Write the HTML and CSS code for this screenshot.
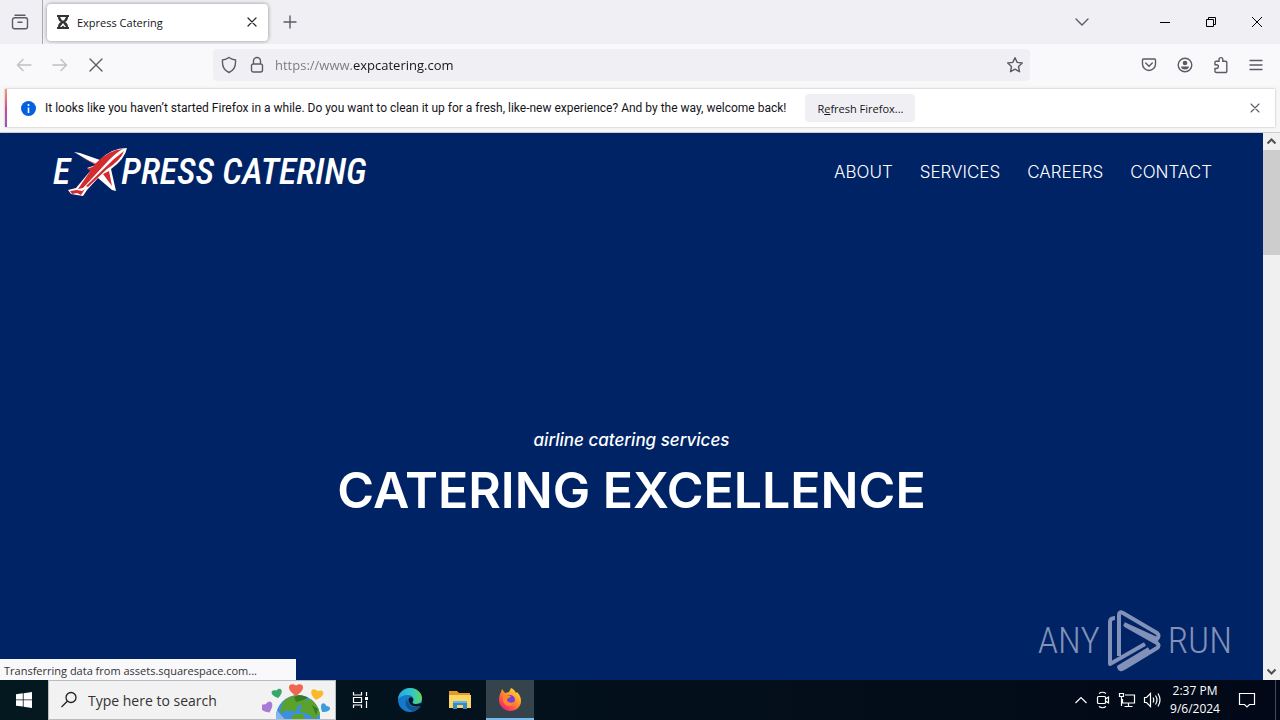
FILE: index.html
```html
<!DOCTYPE html>
<html lang="en">
<head>
<meta charset="utf-8">
<title>Express Catering</title>
<link rel="stylesheet" href="styles.css">
</head>
<body>
<header class="tabbar">
  <button class="recent" aria-label="Recent browsing"><svg width="18" height="18" viewBox="0 0 18 18" class="line"><path d="M4 2.200h10M3.500 4.800h11a2 2 0 0 1 2 2v7a2 2 0 0 1-2 2h-11a2 2 0 0 1-2-2v-7a2 2 0 0 1 2-2zM7 9.200h4"/></svg></button>
  <div class="tab">
    <svg width="14" height="16" viewBox="0 0 14 16"><path fill="#333" d="M1 1h12v2h-1c0 2.500-1 4-3 5 2 1 3 2.500 3 5h1v2H1v-2h1c0-2.500 1-4 3-5-2-1-3-2.500-3-5H1z"/><path fill="#fff" d="M4 3h6L8 6.500H6zM7 9l3 4H8.500L7 11.500 5.500 13H4z"/></svg>
    <span class="tab-title">Express Catering</span>
    <button aria-label="Close tab"><svg width="10" height="10" viewBox="0 0 10 10" class="line dark"><path d="M1 1l8 8M9 1L1 9"/></svg></button>
  </div>
  <button class="newtab" aria-label="New tab"><svg width="14" height="14" viewBox="0 0 14 14" class="line"><path d="M7 1v12M1 7h12"/></svg></button>
  <div class="window">
    <button class="alltabs" aria-label="List all tabs"><svg width="14" height="8" viewBox="0 0 14 8" class="line"><path d="M1 1l6 6 6-6"/></svg></button>
    <button aria-label="Minimize"><svg width="12" height="12" viewBox="0 0 12 12" class="line black crisp"><path d="M1 6h10"/></svg></button>
    <button aria-label="Restore"><svg width="12" height="12" viewBox="0 0 12 12" class="line black restore"><path d="M1.500 3.500h7v7h-7zM3.500 3.500v-2h7v7h-2"/></svg></button>
    <button aria-label="Close"><svg width="12" height="12" viewBox="0 0 12 12" class="line black"><path d="M1 1l10 10M11 1L1 11"/></svg></button>
  </div>
</header>
<div class="toolbar">
  <div class="history">
    <button aria-label="Back" disabled><svg width="16" height="16" viewBox="0 0 16 16" class="line faint"><path d="M15 8H2M7 2.500L1.500 8 7 13.500"/></svg></button>
    <button aria-label="Forward" disabled><svg width="16" height="16" viewBox="0 0 16 16" class="line faint"><path d="M1 8h13M9 2.500L14.500 8 9 13.500"/></svg></button>
    <button aria-label="Stop"><svg width="16" height="14" viewBox="0 0 16 14" class="line"><path d="M2 1l12 12M14 1L2 13"/></svg></button>
  </div>
  <div class="urlbar">
    <button aria-label="Tracking protection"><svg width="16" height="18" viewBox="0 0 16 18" class="line"><path d="M8 1.500c2 1.600 4 2.300 6.500 2.500.5 6-1.500 10.500-6.500 12.500C3 14.500 1 10 1.500 4 4 3.800 6 3.100 8 1.500z"/></svg></button>
    <button aria-label="Site security"><svg width="14" height="18" viewBox="0 0 14 18" class="line"><path d="M3.500 8V5a3.500 3.500 0 0 1 7 0v3M3 8h8a1.500 1.500 0 0 1 1.500 1.500V14a2 2 0 0 1-2 2h-7a2 2 0 0 1-2-2V9.500A1.500 1.500 0 0 1 3 8z"/></svg></button>
    <input class="url" type="text" aria-label="Address" value="https://www.expcatering.com">
    <button aria-label="Bookmark"><svg width="18" height="18" viewBox="0 0 18 18" class="line"><path stroke-linejoin="round" d="M9 1.700l2.200 4.700 5.100.6-3.800 3.500 1 5.200L9 13.200l-4.500 2.500 1-5.200L1.700 7l5.100-.6z"/></svg></button>
  </div>
  <div class="tools">
    <button aria-label="Pocket"><svg width="16" height="16" viewBox="0 0 16 16" class="line"><path d="M2.500 2h11a1 1 0 0 1 1 1v4a6.500 6.500 0 0 1-13 0V3a1 1 0 0 1 1-1zM4.700 6L8 9.200 11.300 6"/></svg></button>
    <button aria-label="Account"><svg width="16" height="16" viewBox="0 0 16 16" class="line"><circle cx="8" cy="8" r="6.800"/><circle cx="8" cy="6" r="2.300" fill="#5b5b66" stroke="none"/><path d="M4 9.500h8c0 1.800-1.800 3-4 3s-4-1.200-4-3z" fill="#5b5b66" stroke="none"/></svg></button>
    <button aria-label="Extensions"><svg width="16" height="18" viewBox="0 0 16 18" class="line"><path d="M2 6.500a1.200 1.200 0 0 1 1.200-1.300H6V3.500a1.900 1.900 0 0 1 3.800 0v1.700h2.700A1.300 1.300 0 0 1 13.800 6.500v8.700a1.200 1.200 0 0 1-1.300 1.300H3.200A1.200 1.200 0 0 1 2 15.200v-2.700h1.500a1.900 1.900 0 0 0 0-3.800H2z"/></svg></button>
    <button aria-label="Menu"><svg width="14" height="12" viewBox="0 0 14 12" class="line"><path d="M1 1.500h12M1 6h12M1 10.500h12"/></svg></button>
  </div>
</div>
<div class="notice-area">
  <div class="notice" role="status">
    <svg width="15" height="15" viewBox="0 0 15 15"><circle cx="7.500" cy="7.500" r="7.500" fill="#0560df"/><path d="M7.500 3v2M7.500 6.500V12" stroke="#fff" stroke-width="1.600"/></svg>
    <span class="notice-text">It looks like you haven’t started Firefox in a while. Do you want to clean it up for a fresh, like-new experience? And by the way, welcome back!</span>
    <button class="refresh">R<u>e</u>fresh Firefox...</button>
    <button class="dismiss" aria-label="Dismiss"><svg width="10" height="10" viewBox="0 0 10 10" class="line thin"><path d="M1 1l8 8M9 1L1 9"/></svg></button>
  </div>
</div>
<div class="viewport">
  <main class="site">
    <div class="site-head">
      <a class="logo" href="#" aria-label="Express Catering"><span>E</span><svg width="60" height="50" viewBox="0 0 60 50"><path fill="#fff" d="M6 5l6 1 20 7Q43 1 59 1 57 12 43 22l5 22-4-1-14-12-11 12-4 6-12-2-3-4 8-2 15-18-4-2 9-3z"/><g fill="#d32b2f"><path d="M9 9l20 8-5 5 3-5zM27 17Q40 3 55 2q-6 3-14 11L15 41l-5 1zM19 22l10-4-5 6zM56 4q-3 9-17 18L20 40l-2-1 28-27zM41 24l3 15-9-12zM2 44l7-1 5 1 3-2-4 6-4-2-5 1z"/></g></svg><span>PRESS CATERING</span></a>
      <nav class="menu"><a href="#">ABOUT</a><a href="#">SERVICES</a><a href="#">CAREERS</a><a href="#">CONTACT</a></nav>
    </div>
    <div class="hero">
      <p class="tagline">airline catering services</p>
      <h1>CATERING EXCELLENCE</h1>
    </div>
    <div class="status">Transferring data from assets.squarespace.com...</div>
    <div class="watermark"><span>ANY</span><svg width="54" height="62" viewBox="0 0 54 62" fill="none" stroke="#8291b7" stroke-width="4" stroke-linejoin="round"><path d="M8 8Q3 8 3 12v42L38 34M12 46V5q0-4 4-2l34 20q3 3 0 6L17 14"/><path d="M18 15l32 18q3 3 0 5L17 58q-4 3-5-1l30-18"/></svg><span>RUN</span></div>
  </main>
  <div class="scrollbar" aria-hidden="true">
    <svg width="17" height="17" viewBox="0 0 17 17"><path d="M4.500 10.500l4-4 4 4" fill="none" stroke="#505050" stroke-width="2"/></svg>
    <div class="thumb"></div>
    <svg width="17" height="17" viewBox="0 0 17 17"><path d="M4.500 6.500l4 4 4-4" fill="none" stroke="#505050" stroke-width="2"/></svg>
  </div>
</div>
<footer class="taskbar">
  <button class="start" aria-label="Start"><svg width="16" height="16" viewBox="0 0 16 16" fill="#fff"><path d="M0 2.300l6.800-1v6.200H0zM7.600 1.200L16 0v7.500H7.600zM0 8.300h6.800v6.300L0 13.700zM7.600 8.300H16V16l-8.400-1.200z"/></svg></button>
  <label class="search"><svg width="18" height="18" viewBox="0 0 18 18" fill="none" stroke="#222" stroke-width="1.300"><circle cx="11" cy="6.500" r="5"/><path d="M7.300 10.200L1.500 16"/></svg>
    <input type="text" placeholder="Type here to search" aria-label="Search">
    <svg width="72" height="38" viewBox="0 0 72 38"><defs><clipPath id="globe"><circle cx="36" cy="36" r="22"/></clipPath><path id="heart" d="M0 6C-10 0-6-7 0-3 6-7 10 0 0 6z"/></defs>
      <g clip-path="url(#globe)"><path fill="#3d8fe0" d="M12 12h50v30H12z"/><path fill="#82b7f4" d="M12 26q9-10 10-12l-10-2v30h14z"/><path fill="#5ba22c" d="M22 20q10-9 20-5 4 3 0 6l-6 4-3 6-8-2-7 4 2-9zM40 22l10-5 10 15-8 6-6-5-8-2zM32 33l9 0 3 7H28z"/><path fill="#347d24" d="M32 16q8-4 16 0l-7 3-7 2zM50 24l6 4-2 6z"/></g>
      <use href="#heart" transform="translate(34 8) scale(1.150)" fill="#f2654f"/><use href="#heart" transform="translate(15 12) rotate(-15) scale(.85)" fill="#35a768"/><use href="#heart" transform="translate(55 13) rotate(12)" fill="#f9b928"/><use href="#heart" transform="translate(5 26) rotate(-24)" fill="#a77bd4"/><use href="#heart" transform="translate(63 27) rotate(35) scale(.8)" fill="#3d9ce0"/></svg>
  </label>
  <button class="app" aria-label="Task View"><svg width="18" height="18" viewBox="0 0 18 18" fill="none" stroke="#fff" stroke-width="1.200"><path d="M2.500 1v3h8V1M2.500 17v-3h8v3M2.500 6.500h8v5h-8zM15.500 1v4M15.500 10v7"/><path fill="#fff" stroke="none" d="M14 6h3v3h-3z"/></svg></button>
  <button class="app" aria-label="Edge"><svg width="26" height="26" viewBox="0 0 26 26"><defs><linearGradient id="edge-top"><stop stop-color="#2ba5df"/><stop offset=".55" stop-color="#31c5cc"/><stop offset="1" stop-color="#62d858"/></linearGradient></defs><circle cx="13" cy="13" r="12" fill="#1478cb"/><path fill="url(#edge-top)" d="M1 12C2 5 7 1 13 1c7 0 12 5 12 10 0 4-3 6-6 6-2 0-4-1-3-2 2-3 0-7-5-7-5 0-8 2-10 4z"/><path fill="#145292" d="M10 12c-4 5 1 12 7 12 3-1 6-3 7-5-6 3-13 0-14-7z"/><path fill="#041820" d="M12 11c2-2 5 0 4 3-1 1-1 3 3 3l7-1-2 3c-9 2-14-3-12-8z"/></svg></button>
  <button class="app" aria-label="File Explorer"><svg width="22" height="20" viewBox="0 0 22 20"><path fill="#e29b27" d="M0 1h8l2 2h11v4H0z"/><path fill="#fed565" d="M0 5h22v13H0z"/><path fill="#328cca" d="M4 11h14v8h-4v-4H8v4H4z"/><path fill="#61b6e7" d="M4 11h14v2H4z"/></svg></button>
  <button class="app active" aria-label="Firefox"><svg width="24" height="24" viewBox="0 0 24 24"><defs><linearGradient id="fox" x1="1" y1="0" x2=".2" y2="1"><stop stop-color="#fff044"/><stop offset=".45" stop-color="#ff9a25"/><stop offset=".8" stop-color="#ff4059"/><stop offset="1" stop-color="#dc188b"/></linearGradient></defs><path fill="url(#fox)" d="M3 5l1-3 3 4 4-1 2-4c3 1 4 3 5 5l1-1c3 3 4 6 4 9 0 6-5 10-11 10S1 19 1 13c0-4 1-6 2-8z"/><circle cx="12" cy="13" r="5" fill="#7440dc"/><path fill="#ff8a25" d="M5 8c4-1 5 1 8 1-1 2-3 2-4 3 0 4 5 5 8 2-1 6-11 7-12-1z"/></svg></button>
  <div class="tray">
    <button aria-label="Show hidden icons"><svg width="14" height="8" viewBox="0 0 14 8"><path d="M1.500 7L7 1.500 12.500 7"/></svg></button>
    <button aria-label="Meet Now"><svg width="16" height="20" viewBox="0 0 16 20"><path d="M3.500 6.500h6a1 1 0 0 1 1 1v5a1 1 0 0 1-1 1h-6a1 1 0 0 1-1-1v-5a1 1 0 0 1 1-1zM10.500 9l3-2v6l-3-2M4 3.500q3.500-2.500 7 0M4 16.500q3.500 2.500 7 0"/></svg></button>
    <button aria-label="Network"><svg width="18" height="16" viewBox="0 0 18 16"><path d="M7 3h9.500v8H4.500V7M10.500 11v3.500M6.500 14.500h8M1.500 1.500h4v3h-4zM3.500 4.500V14"/></svg></button>
    <button aria-label="Volume"><svg width="18" height="16" viewBox="0 0 18 16"><path d="M1.500 5.500h2l4-4v13l-4-4h-2zM10 5.500q1.500 2.500 0 5M12.500 3.500q3 4.500 0 9M15 1.500q4 6.500 0 13"/></svg></button>
    <div class="clock"><span>2:37 PM</span><span>9/6/2024</span></div>
    <button class="action" aria-label="Notifications"><svg width="18" height="18" viewBox="0 0 18 18"><path d="M1.500 2.500h15v11h-5L9 16l-2.500-2.500h-5z"/></svg></button>
  </div>
</footer>
</body>
</html>
```
FILE: styles.css
```css
* { box-sizing: border-box; }
body {
  margin: 0;
  min-height: 100vh;
  display: flex;
  flex-direction: column;
  font-family: "Open Sans", "Noto Sans", sans-serif;
  font-size: 12px;
  color: #15141a;
  background: #f9f9fb;
}
button {
  display: flex;
  align-items: center;
  justify-content: center;
  margin: 0;
  padding: 0;
  border: 0;
  background: none;
  color: inherit;
  font: inherit;
}
svg { display: block; flex: none; }
input { border: 0; outline: 0; padding: 0; min-width: 0; background: none; font: inherit; }
.line { fill: none; stroke: #5b5b66; stroke-width: 1.4; stroke-linecap: round; }
.dark { stroke: #25252d; stroke-width: 1.2; }
.thin { stroke-width: 1.1; }
.black { stroke: #000; stroke-width: 1; stroke-linecap: butt; }
.crisp { shape-rendering: crispEdges; }
.faint { stroke: #bfbfc5; }

.tabbar { display: flex; align-items: center; height: 44px; background: #f0f0f4; }
.recent { width: 43px; height: 44px; padding-right: 3px; border-right: 1px solid #a9a9b0; }
.tab {
  display: flex;
  align-items: center;
  gap: 7px;
  width: 221px;
  height: 37px;
  margin-left: 4px;
  padding: 0 11px 0 9px;
  border-radius: 4px;
  background: #fff;
  box-shadow: 0 0 4px rgba(0, 0, 0, .4);
}
.tab-title { flex: 1; font-size: 11px; }
.newtab { width: 44px; height: 40px; }
.window { display: flex; align-items: center; margin-left: auto; }
.window button { width: 46px; height: 44px; }
.window .alltabs { margin-right: 37px; }

.toolbar { display: flex; align-items: center; height: 41px; background: #f9f9fb; }
.history { display: flex; gap: 20px; width: 213px; padding-left: 16px; }
.urlbar {
  flex: 1;
  display: flex;
  align-items: center;
  gap: 13px;
  height: 32px;
  padding: 0 6px 0 8px;
  border-radius: 4px;
  background: #f0f0f4;
}
.url {
  flex: 1;
  margin-left: -2px;
  font-size: 13px;
  color: transparent;
  background: linear-gradient(90deg, #77777e 77px, #15141a 77px);
  -webkit-background-clip: text;
  background-clip: text;
}
.tools { display: flex; align-items: center; justify-content: flex-end; gap: 20px; width: 250px; padding-right: 17px; }

.notice-area { padding: 4px 5px 5px; border-bottom: 1px solid #ccccd1; background: #f7f7f8; }
.notice {
  display: flex;
  align-items: center;
  height: 38px;
  padding: 0 15px 0 14px;
  border-left: 2px solid;
  border-image: linear-gradient(#f5a36b, #d04b92, #8b55c8) 1;
  background: #fff;
  box-shadow: 0 0 2px rgba(0, 0, 0, .3);
}
.notice-text { margin-left: 9px; font-family: Roboto, sans-serif; font-size: 12px; }
.refresh { height: 28px; margin-left: 19px; padding: 0 12px; border-radius: 4px; background: #f0f0f4; font-size: 11px; }
.dismiss { margin-left: auto; }

.viewport { flex: 1; display: flex; }
.site { position: relative; flex: 1; display: flex; flex-direction: column; background: #002366; color: #fff; }
.site-head { display: flex; justify-content: space-between; align-items: center; padding: 13px 51px 0 53px; }
.logo {
  display: flex;
  align-items: center;
  color: #fff;
  text-decoration: none;
  font: italic 500 36px/52px "Roboto Condensed", "Liberation Sans Narrow", sans-serif;
}
.logo svg { margin: 0 -7px 0 -2px; }
.menu { display: flex; gap: 27px; }
.menu a { color: #fff; text-decoration: none; font: 300 17px/24px Inter, sans-serif; }
.hero { flex: 1; display: flex; flex-direction: column; justify-content: flex-end; align-items: center; padding-bottom: 160px; }
.tagline { margin: 0; font: italic 500 17px/24px Inter, sans-serif; }
h1 { margin: 8px 0 0; font: 600 50px/60px Inter, sans-serif; }
.status {
  position: absolute;
  left: 0;
  bottom: 0;
  width: 296px;
  height: 21px;
  padding-left: 4px;
  background: #f9f9fb;
  color: #333;
  font-size: 11px;
  line-height: 24px;
}
.watermark {
  position: absolute;
  right: 31px;
  bottom: 8px;
  display: flex;
  align-items: center;
  gap: 7px;
  color: #8291b7;
  font: 300 37px/62px "Roboto Condensed", "Liberation Sans Narrow", sans-serif;
}
.scrollbar { display: flex; flex-direction: column; width: 17px; background: #f0f0f0; }
.thumb { height: 105px; margin-bottom: auto; background: #cdcdcd; }

.taskbar { display: flex; height: 40px; background: linear-gradient(90deg, #041820, #03101b 50%, #020817); color: #fff; }
.start { width: 48px; }
.search { display: flex; align-items: center; width: 288px; padding: 0 1px 0 11px; border: 1px solid #b8bcbe; background: #f2f2f2; }
.search input { flex: 1; margin-left: 10px; font-size: 14px; color: #333; }
.search input::placeholder { color: #333; opacity: 1; }
.app { width: 48px; margin-right: 2px; }
.active { margin-right: 0; border-bottom: 2px solid #76b9ed; background: #34434c; }
.tray { display: flex; align-items: center; gap: 7px; margin-left: auto; }
.tray svg { fill: none; stroke: #fff; stroke-width: 1.2; }
.clock { display: flex; flex-direction: column; align-items: center; width: 54px; font-size: 12px; line-height: 18px; white-space: nowrap; }
.action { width: 47px; height: 40px; padding-right: 11px; margin-right: 4px; border-right: 1px solid #444b55; }
```
